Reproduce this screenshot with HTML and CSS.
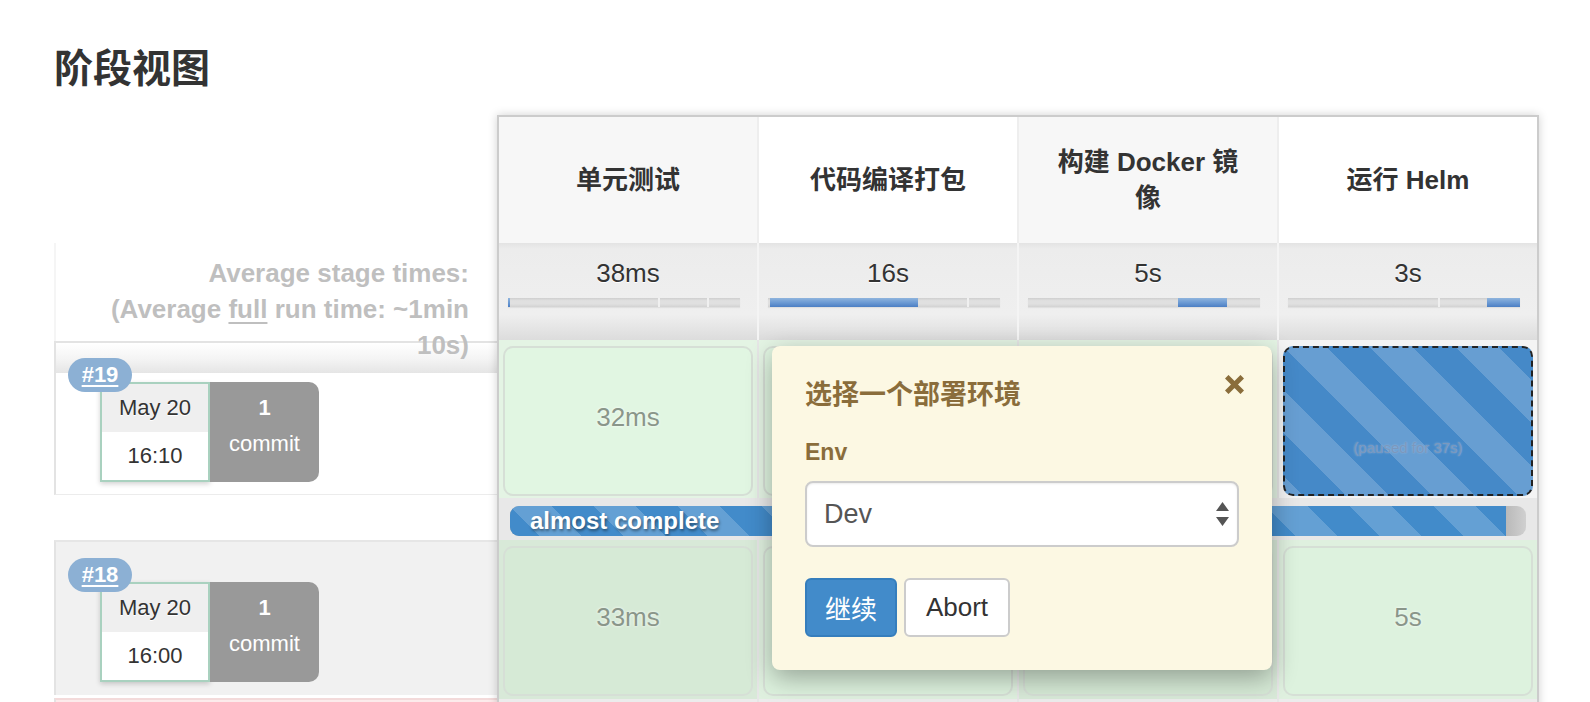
FILE: index.html
```html
<!DOCTYPE html>
<html lang="zh-CN">
<head>
<meta charset="utf-8">
<title>阶段视图</title>
<link rel="stylesheet" href="styles.css">
</head>
<body>
<main class="page">
  <h1 class="title">阶段视图</h1>
  <div class="stage-view">
    <div class="side">
      <div class="side-head"></div>
      <div class="side-avg">
        <div class="avg-text">
          <div>Average stage times:</div>
          <div>(Average <u>full</u> run time: ~1min 10s)</div>
        </div>
      </div>
      <div class="build build-19">
        <span class="badge">#19</span>
        <div class="build-info">
          <div class="date">
            <div class="date-day">May 20</div>
            <div class="date-time">16:10</div>
          </div>
          <div class="commits">
            <div class="commit-num">1</div>
            <div>commit</div>
          </div>
        </div>
      </div>
      <div class="side-gap"></div>
      <div class="build build-18">
        <span class="badge">#18</span>
        <div class="build-info">
          <div class="date">
            <div class="date-day">May 20</div>
            <div class="date-time">16:00</div>
          </div>
          <div class="commits">
            <div class="commit-num">1</div>
            <div>commit</div>
          </div>
        </div>
      </div>
      <div class="side-gap-small"></div>
      <div class="build build-17"></div>
    </div>

    <div class="table">
      <div class="row head-row">
        <div class="head-cell alt">单元测试</div>
        <div class="head-cell">代码编译打包</div>
        <div class="head-cell alt">构建 Docker 镜像</div>
        <div class="head-cell">运行 Helm</div>
      </div>

      <div class="row avg-row">
        <div class="avg-cell">
          <div class="avg-time">38ms</div>
          <div class="bar">
            <span class="seg on" style="width:2px"></span>
            <span class="seg" style="width:148px"></span>
            <span class="seg div" style="width:49px"></span>
            <span class="seg div" style="width:33px"></span>
          </div>
        </div>
        <div class="avg-cell">
          <div class="avg-time">16s</div>
          <div class="bar">
            <span class="seg" style="width:2px"></span>
            <span class="seg on" style="width:148px"></span>
            <span class="seg" style="width:49px"></span>
            <span class="seg div" style="width:33px"></span>
          </div>
        </div>
        <div class="avg-cell">
          <div class="avg-time">5s</div>
          <div class="bar">
            <span class="seg" style="width:2px"></span>
            <span class="seg" style="width:148px"></span>
            <span class="seg on" style="width:49px"></span>
            <span class="seg" style="width:33px"></span>
          </div>
        </div>
        <div class="avg-cell">
          <div class="avg-time">3s</div>
          <div class="bar">
            <span class="seg" style="width:2px"></span>
            <span class="seg" style="width:148px"></span>
            <span class="seg div" style="width:49px"></span>
            <span class="seg on" style="width:33px"></span>
          </div>
        </div>
      </div>

      <div class="row stage-row r19">
        <div class="stage-td"><div class="stage-cell">32ms</div></div>
        <div class="stage-td"><div class="stage-cell"></div></div>
        <div class="stage-td"><div class="stage-cell"></div></div>
        <div class="stage-td paused-td"><div class="stage-cell paused">(paused for 37s)</div></div>
      </div>

      <div class="progress-row">
        <div class="progress">
          <div class="progress-fill" style="width:98%">almost complete</div>
        </div>
      </div>

      <div class="row stage-row r18">
        <div class="stage-td dark"><div class="stage-cell">33ms</div></div>
        <div class="stage-td light"><div class="stage-cell"></div></div>
        <div class="stage-td dark"><div class="stage-cell"></div></div>
        <div class="stage-td light"><div class="stage-cell">5s</div></div>
      </div>

      <div class="row stage-row r17">
        <div class="stage-td"></div>
        <div class="stage-td"></div>
        <div class="stage-td"></div>
        <div class="stage-td"></div>
      </div>

      <div class="popup">
        <h2 class="popup-title">选择一个部署环境</h2>
        <svg class="close" viewBox="0 0 19 19" width="19" height="19" aria-hidden="true">
          <path d="M3.5 3.5L15.5 15.5M15.5 3.5L3.5 15.5" stroke="#8a6d3b" stroke-width="5" stroke-linecap="square" fill="none"/>
        </svg>
        <div class="env-label">Env</div>
        <div class="select">
          <span>Dev</span>
          <svg class="select-arrows" viewBox="0 0 13 26" width="13" height="26" aria-hidden="true">
            <path d="M6.5 1L13 10H0Z M0 16H13L6.5 25Z" fill="#555"/>
          </svg>
        </div>
        <div class="actions">
          <button class="btn btn-primary" type="button">继续</button>
          <button class="btn btn-default" type="button">Abort</button>
        </div>
      </div>
    </div>
  </div>
</main>
</body>
</html>
```

FILE: styles.css
```css
html, body {
  margin: 0;
  padding: 0;
  overflow: hidden;
  background: #fff;
}

body {
  width: 1590px;
  height: 702px;
  font-family: "Liberation Sans", "Noto Sans CJK SC", sans-serif;
  color: #333;
}

.page {
  padding: 42px 0 0 54px;
}

.title {
  margin: 0;
  font-family: "Noto Sans CJK SC", sans-serif;
  font-size: 39px;
  line-height: 46px;
  font-weight: 700;
  color: #333;
}

.stage-view {
  display: flex;
  align-items: flex-start;
  margin-top: 27px;
}

/* ---------- left column ---------- */
.side {
  width: 443px;
  flex: none;
}

.side-head {
  height: 128px;
}

.side-avg {
  height: 98px;
  box-sizing: border-box;
  border-left: 2px solid #f5f5f5;
  padding: 12px 28px 0 30px;
  text-align: right;
}

.avg-text {
  position: relative;
  z-index: 1;
  font-size: 26px;
  line-height: 36px;
  font-weight: 700;
  color: #bfbfbf;
}

.avg-text u {
  text-decoration-thickness: 2px;
  text-underline-offset: 4px;
}

.build {
  position: relative;
  box-sizing: border-box;
  height: 154px;
  border-left: 2px solid #e3e3e3;
  border-top: 2px solid #e3e3e3;
  padding: 39px 0 0 44px;
}

.build-19 {
  border-bottom: 1px solid #ececec;
  background: linear-gradient(to bottom, #fff 0, #f4f4f4 16px, #e5e5e5 30px, #fff 30px) no-repeat;
  background-size: 100% 31px;
}

.side-gap {
  height: 45px;
}

.build-18 {
  height: 155px;
  padding-top: 40px;
  background: #f1f1f1;
  border-top-color: #e6e6e6;
}

.side-gap-small {
  height: 3px;
}

.build-17 {
  height: 155px;
  background: #fcebeb;
  border-top-color: #f3dada;
}

.badge {
  position: absolute;
  left: 12px;
  top: 15px;
  z-index: 2;
  width: 64px;
  height: 34px;
  border-radius: 17px;
  background: #8cb0d4;
  color: #fff;
  font-size: 22px;
  line-height: 34px;
  font-weight: 700;
  text-align: center;
  text-decoration: underline;
  text-decoration-thickness: 2px;
  text-underline-offset: 3px;
}

.build-18 .badge {
  top: 16px;
}

.build-info {
  display: flex;
}

.date {
  width: 110px;
  height: 100px;
  box-sizing: border-box;
  border: 2px solid #a9d1bf;
  box-shadow: 0 2px 5px rgba(0, 0, 0, 0.18);
  font-size: 22px;
  text-align: center;
  color: #333;
  text-shadow: 0 1px 0 #fff;
}

.date-day {
  height: 48px;
  line-height: 48px;
  background: #efefef;
}

.date-time {
  height: 48px;
  line-height: 48px;
  background: #fff;
}

.commits {
  width: 109px;
  height: 100px;
  box-sizing: border-box;
  padding-top: 8px;
  background: #999;
  border-radius: 0 10px 10px 0;
  color: #fff;
  font-size: 22px;
  line-height: 36px;
  text-align: center;
}

.commit-num {
  font-weight: 700;
}

/* ---------- stage table ---------- */
.table {
  position: relative;
  width: 1042px;
  height: 760px;
  flex: none;
  box-sizing: border-box;
  border: 2px solid #ccc;
  border-bottom: none;
  background: #eee;
  box-shadow: 0 0 9px rgba(0, 0, 0, 0.18);
}

.row {
  display: grid;
  grid-template-columns: repeat(4, 1fr);
  column-gap: 2px;
}

.head-row {
  height: 126px;
  background: #eee;
}

.head-cell {
  display: flex;
  align-items: center;
  justify-content: center;
  padding: 0 33px;
  background: #fff;
  text-align: center;
  font-size: 26px;
  line-height: 36px;
  font-weight: 700;
  color: #333;
}

.head-cell.alt {
  background: #f7f7f7;
}

.avg-row {
  height: 97px;
  background: #f4f4f4;
}

.avg-cell {
  box-sizing: border-box;
  padding-top: 12px;
  background: linear-gradient(to bottom, #e3e3e3 0, #ececec 6px, #efefef 74%, #dcdcdc 100%);
}

.avg-time {
  font-size: 26px;
  line-height: 36px;
  text-align: center;
  color: #333;
  text-shadow: 0 1px 0 #fff;
}

.bar {
  display: flex;
  height: 9px;
  margin: 7px 17px 0 9px;
  box-shadow: 0 1px 1px rgba(0, 0, 0, 0.06);
}

.seg {
  display: block;
  height: 100%;
  box-sizing: border-box;
  background: linear-gradient(to bottom, #cecece, #e0e0e0 30%, #e0e0e0 65%, #d2d2d2);
}

.seg.div {
  box-shadow: inset 2px 0 0 #f0f0f0;
}

.seg.on {
  background: linear-gradient(to bottom, #8fb4dd, #6d9bd4 50%, #4c7fc4);
}

.stage-row {
  height: 158px;
  background: #e6e6e6;
}

.stage-td {
  box-sizing: border-box;
  padding: 6px 4px 2px;
  background: #e4f4e4;
}

.stage-cell {
  display: flex;
  align-items: center;
  justify-content: center;
  height: 100%;
  box-sizing: border-box;
  padding-bottom: 7px;
  border: 2px solid #d6dfd6;
  border-radius: 10px;
  background: #e1f6e2;
  font-size: 26px;
  color: #8a968a;
  text-shadow: 0 0 3px #fff;
}

.paused-td {
  background: #f4f4f4;
}

.stage-cell.paused {
  align-items: flex-start;
  padding-top: 90px;
  padding-bottom: 0;
  border: 2px dashed #222;
  background-color: #4589c8;
  background-image: linear-gradient(45deg, rgba(255, 255, 255, 0.18) 25%, transparent 25%, transparent 50%, rgba(255, 255, 255, 0.18) 50%, rgba(255, 255, 255, 0.18) 75%, transparent 75%, transparent);
  background-size: 86px 86px;
  font-size: 15px;
  line-height: 20px;
  color: #7b98bd;
  text-shadow: 0 0 2px rgba(170, 195, 225, 0.8);
}

.progress-row {
  height: 42px;
  box-sizing: border-box;
  padding: 8px 11px 0;
  background: #e8e8e8;
}

.progress {
  display: flex;
  height: 30px;
  border-radius: 9px;
  overflow: hidden;
  background: linear-gradient(to right, #adadad 97%, #d0d0d0 100%);
}

.progress-fill {
  display: flex;
  align-items: center;
  box-sizing: border-box;
  padding-left: 20px;
  background-color: #428bca;
  background-image: linear-gradient(45deg, rgba(255, 255, 255, 0.18) 25%, transparent 25%, transparent 50%, rgba(255, 255, 255, 0.18) 50%, rgba(255, 255, 255, 0.18) 75%, transparent 75%, transparent);
  background-size: 84px 84px;
  color: #fff;
  font-size: 24px;
  font-weight: 700;
  text-shadow: 1px 2px 3px rgba(0, 0, 0, 0.45);
  white-space: nowrap;
}

.r18 {
  height: 159px;
}

.r18 .stage-td {
  padding-bottom: 3px;
}

.r18 .stage-td.dark {
  background: #d8e9d8;
}

.r18 .stage-td.dark .stage-cell {
  background: #d6ead6;
}

.r18 .stage-td.light {
  background: #dff0df;
}

.r18 .stage-td.light .stage-cell {
  background: #ddf2de;
}

.r17 .stage-td {
  background: #ececec;
}

/* ---------- input popover ---------- */
.popup {
  position: absolute;
  left: 273px;
  top: 229px;
  z-index: 5;
  width: 500px;
  height: 324px;
  box-sizing: border-box;
  padding: 29px 33px 0;
  background: #fcf8e3;
  border-radius: 8px;
  box-shadow: 0 8px 26px rgba(0, 0, 0, 0.32);
  color: #8a6d3b;
}

.popup-title {
  margin: 0;
  font-family: "Noto Sans CJK SC", sans-serif;
  font-size: 27px;
  line-height: 36px;
  font-weight: 700;
}

.close {
  position: absolute;
  top: 29px;
  right: 28px;
}

.env-label {
  margin-top: 26px;
  font-size: 23px;
  line-height: 30px;
  font-weight: 700;
}

.select {
  display: flex;
  align-items: center;
  justify-content: space-between;
  height: 66px;
  margin-top: 14px;
  box-sizing: border-box;
  padding: 0 8px 0 17px;
  border: 2px solid #ccc;
  border-radius: 8px;
  background: #fff;
  box-shadow: inset 0 1px 2px rgba(0, 0, 0, 0.08);
  font-size: 27px;
  color: #555;
}

.actions {
  display: flex;
  gap: 7px;
  margin-top: 31px;
}

.btn {
  height: 59px;
  box-sizing: border-box;
  padding: 0;
  border: 2px solid;
  border-radius: 6px;
  font-family: "Liberation Sans", "Noto Sans CJK SC", sans-serif;
  font-size: 26px;
}

.btn-primary {
  width: 92px;
  background: #428bca;
  border-color: #357ebd;
  color: #fff;
}

.btn-default {
  width: 106px;
  background: #fff;
  border-color: #ccc;
  color: #333;
}
```
